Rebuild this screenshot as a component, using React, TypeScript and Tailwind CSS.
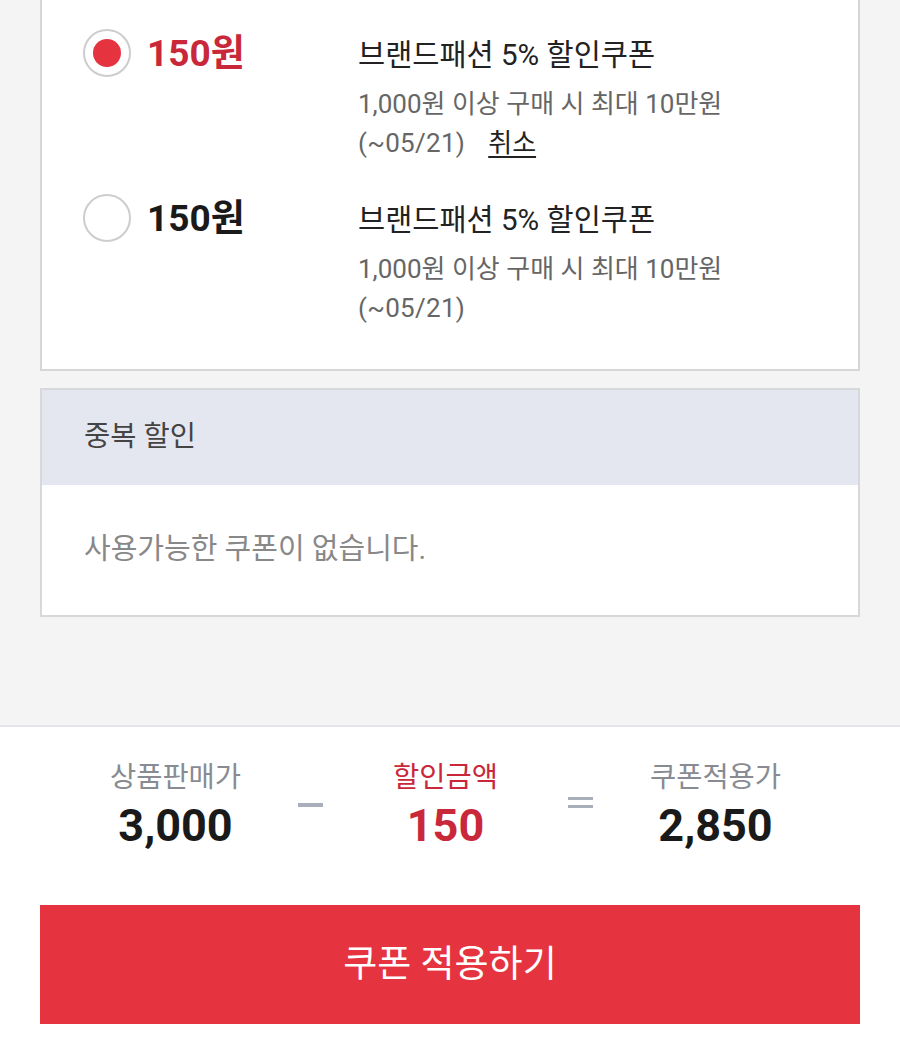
import React from 'react';

interface Coupon {
  amount: string;
  title: string;
  condition: string;
  period: string;
  selected: boolean;
}

const coupons: Coupon[] = [
  { amount: '150원', title: '브랜드패션 5% 할인쿠폰', condition: '1,000원 이상 구매 시 최대 10만원', period: '(~05/21)', selected: true },
  { amount: '150원', title: '브랜드패션 5% 할인쿠폰', condition: '1,000원 이상 구매 시 최대 10만원', period: '(~05/21)', selected: false },
];

const font = { fontFamily: 'Roboto, "Noto Sans CJK KR", sans-serif' };

const Radio: React.FC<{ checked: boolean }> = ({ checked }) => (
  <span className="flex h-[48px] w-[48px] shrink-0 items-center justify-center rounded-full border-2 border-[#cdcdcd] bg-white">
    {checked && <span className="h-[28px] w-[28px] rounded-full bg-[#e5343f]"></span>}
  </span>
);

const CouponRow: React.FC<{ coupon: Coupon }> = ({ coupon }) => (
  <div className="flex">
    <div className="flex h-[40px] w-[275px] shrink-0 items-center gap-[16px]">
      <Radio checked={coupon.selected} />
      <span className={`text-[37px] font-bold leading-none ${coupon.selected ? 'text-[#c8283a]' : 'text-[#1a1a1a]'}`}>
        {coupon.amount}
      </span>
    </div>
    <div className="flex flex-col pt-[2px]">
      <div className="text-[29.5px] leading-[40px] text-[#222]">{coupon.title}</div>
      <div className="mt-[10px] text-[26px] leading-[39px] text-[#666]">
        <div>{coupon.condition}</div>
        <div className="flex gap-[23px]">
          <span className="tracking-[0.3px]">{coupon.period}</span>
          {coupon.selected && <span className="text-[#222] underline underline-offset-4">취소</span>}
        </div>
      </div>
    </div>
  </div>
);

const Summary: React.FC<{ label: string; value: string; red?: boolean }> = ({ label, value, red }) => (
  <div className="flex w-[245px] shrink-0 flex-col items-center">
    <div className={`text-[28.5px] leading-[36px] ${red ? 'text-[#c8283a]' : 'text-[#888b92]'}`}>{label}</div>
    <div className={`mt-[8px] text-[45px] font-bold leading-[44px] ${red ? 'text-[#c8283a]' : 'text-[#1a1a1a]'}`}>{value}</div>
  </div>
);

export default function App() {
  return (
    <div className="flex min-h-[1054px] w-[900px] flex-col bg-[#f4f4f4]" style={font}>
      <div className="px-[40px]">
        <div className="flex flex-col gap-[35px] border-x-2 border-b-2 border-[#d6d6d6] bg-white pb-[41px] pl-[41px] pt-[33px]">
          {coupons.map((c, i) => (
            <CouponRow key={i} coupon={c} />
          ))}
        </div>

        <div className="mt-[17px] border-2 border-[#d6d8dc] bg-white">
          <div className="flex h-[95px] items-center bg-[#e4e7ef] px-[42px] text-[28.5px] text-[#444]">중복 할인</div>
          <div className="flex h-[130px] items-center px-[42px] text-[29px] text-[#888]">사용가능한 쿠폰이 없습니다.</div>
        </div>
      </div>

      <div className="mt-[108px] flex flex-1 flex-col border-t-2 border-[#e3e5e9] bg-white">
        <div className="flex pl-[53px] pt-[33px]">
          <Summary label="상품판매가" value="3,000" />
          <div className="flex w-[25px] shrink-0 pt-[43px]">
            <span className="h-[4px] w-[25px] bg-[#a9aebb]"></span>
          </div>
          <Summary label="할인금액" value="150" red />
          <div className="flex w-[25px] shrink-0 flex-col gap-[5px] pt-[37px]">
            <span className="h-[3px] w-[25px] bg-[#a9aebb]"></span>
            <span className="h-[3px] w-[25px] bg-[#a9aebb]"></span>
          </div>
          <Summary label="쿠폰적용가" value="2,850" />
        </div>

        <div className="mt-[57px] px-[40px]">
          <button className="flex h-[119px] w-full items-center justify-center bg-[#e5343f] text-[37px] text-white">
            쿠폰 적용하기
          </button>
        </div>
      </div>
    </div>
  );
}
